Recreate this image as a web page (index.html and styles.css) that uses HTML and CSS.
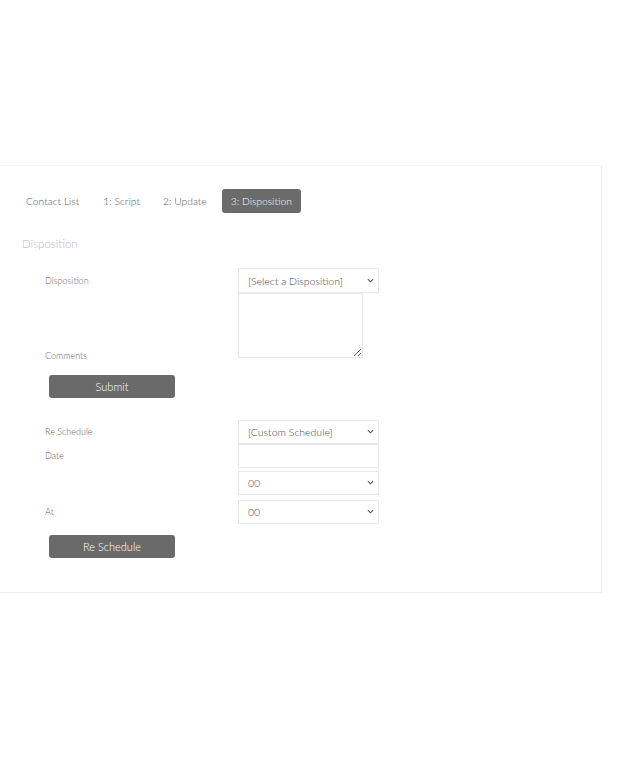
FILE: index.html
```html
<!DOCTYPE html>
<html>
<head>
<meta charset="utf-8">
<link rel="stylesheet" href="styles.css">
</head>
<body>
<div class="card">
  <nav class="tabs">
    <a class="tab">Contact List</a>
    <a class="tab">1: Script</a>
    <a class="tab">2: Update</a>
    <a class="tab active">3: Disposition</a>
  </nav>
  <h2 class="section-title">Disposition</h2>
  <form class="form">
    <div class="row">
      <label class="label">Disposition</label>
      <div class="select-wrap">
        <select class="select"><option>[Select a Disposition]</option></select>
        <svg class="chev" viewBox="0 0 8 5" width="7" height="5"><path d="M1 1l3 3 3-3" fill="none" stroke="#555" stroke-width="1.3"/></svg>
      </div>
    </div>
    <div class="row row-end">
      <label class="label">Comments</label>
      <textarea class="textarea"></textarea>
    </div>
    <button type="button" class="btn btn-submit">Submit</button>

    <div class="row row-resched">
      <label class="label">Re Schedule</label>
      <div class="select-wrap">
        <select class="select select-short"><option>[Custom Schedule]</option></select>
        <svg class="chev" viewBox="0 0 8 5" width="7" height="5"><path d="M1 1l3 3 3-3" fill="none" stroke="#555" stroke-width="1.3"/></svg>
      </div>
    </div>
    <div class="row">
      <label class="label">Date</label>
      <input class="input" type="text">
    </div>
    <div class="row row-hour">
      <span class="label"></span>
      <div class="select-wrap">
        <select class="select select-short"><option>00</option></select>
        <svg class="chev" viewBox="0 0 8 5" width="7" height="5"><path d="M1 1l3 3 3-3" fill="none" stroke="#555" stroke-width="1.3"/></svg>
      </div>
    </div>
    <div class="row row-min">
      <label class="label">At</label>
      <div class="select-wrap">
        <select class="select select-short"><option>00</option></select>
        <svg class="chev" viewBox="0 0 8 5" width="7" height="5"><path d="M1 1l3 3 3-3" fill="none" stroke="#555" stroke-width="1.3"/></svg>
      </div>
    </div>
    <button type="button" class="btn btn-resched">Re Schedule</button>
  </form>
</div>
</body>
</html>
```
FILE: styles.css
```css
html, body {
  margin: 0;
  padding: 0;
  background: #fff;
}
body {
  font-family: Lato, "Open Sans", sans-serif;
  color: #555;
}
.card {
  margin-top: 165px;
  width: 602px;
  height: 428px;
  box-sizing: border-box;
  border: 1px solid #ececec;
  border-left: none;
  border-top-color: #f6f6f6;
  box-shadow: 0 1px 2px rgba(0,0,0,0.05);
  padding: 23px 0 0 18px;
}
.tabs {
  display: flex;
  gap: 7px;
  align-items: center;
}
.tab {
  display: block;
  font-size: 10.3px;
  font-weight: 300;
  line-height: 24px;
  height: 24px;
  padding: 0 8px;
  color: #555;
  border-radius: 3px;
}
.tab:first-child {
  margin-right: 1px;
}
.tab.active {
  background: #6b6b6b;
  color: #fff;
  padding: 0 9px;
}
.section-title {
  margin: 23px 0 0 4px;
  font-size: 11.5px;
  line-height: 16px;
  font-weight: 300;
  color: #bbb;
}
.form {
  margin: 16px 0 0 27px;
  display: flex;
  flex-direction: column;
  align-items: flex-start;
}
.row {
  display: grid;
  grid-template-columns: 193px 141px;
  align-items: center;
}
.row-end {
  align-items: end;
}
.label {
  font-size: 9px;
  font-weight: 300;
  color: #666;
  line-height: 14px;
}
.row-end .label {
  margin-bottom: -5px;
}
.select-wrap {
  position: relative;
  width: 141px;
}
.select {
  appearance: none;
  -webkit-appearance: none;
  display: block;
  width: 141px;
  height: 25px;
  box-sizing: border-box;
  border: 1px solid #e8e8e8;
  border-radius: 0;
  background: #fff;
  padding: 0 20px 0 9px;
  font-family: Lato, "Open Sans", sans-serif;
  font-size: 10.5px;
  font-weight: 300;
  color: #444;
}
.select-short {
  height: 24px;
}
.chev {
  position: absolute;
  right: 5px;
  top: 10px;
}
.select-short + .chev {
  top: 9px;
}
.textarea {
  display: block;
  width: 125px;
  height: 65px;
  box-sizing: border-box;
  border: 1px solid #e8e8e8;
  border-radius: 0;
  resize: both;
  margin: 0;
  font-family: Lato, sans-serif;
}
.input {
  display: block;
  width: 141px;
  height: 24px;
  box-sizing: border-box;
  border: 1px solid #e8e8e8;
  border-radius: 0;
  margin: 0;
  padding: 0 9px;
}
.btn {
  width: 126px;
  height: 23px;
  margin-left: 4px;
  border: none;
  border-radius: 3px;
  background: #6a6a6a;
  color: #fff;
  font-family: Lato, sans-serif;
  font-size: 11px;
  font-weight: 300;
  padding: 0;
}
.btn-submit {
  margin-top: 17px;
}
.row-resched {
  margin-top: 22px;
}
.row-hour {
  margin-top: 3px;
}
.row-min {
  margin-top: 5px;
}
.btn-resched {
  margin-top: 11px;
}
```
